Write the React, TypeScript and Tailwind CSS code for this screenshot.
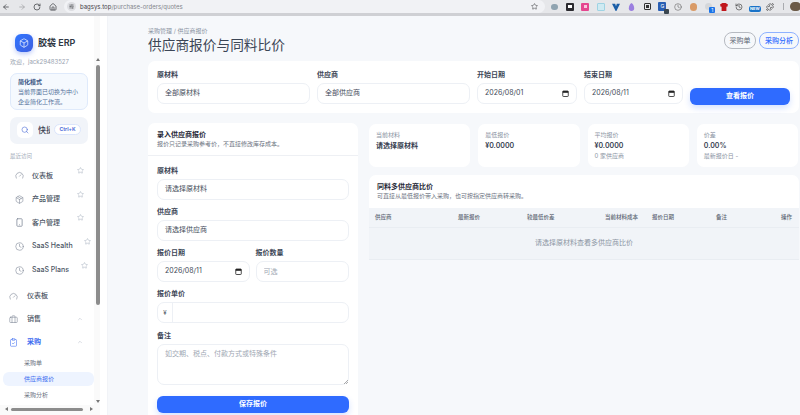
import React from 'react';
import { ArrowLeft, ArrowRight, RotateCw, Home, Star, Search, Gauge, Package, Smartphone, Clock, Briefcase, ClipboardCheck, ChevronUp, Box, Puzzle, History, SlidersHorizontal } from 'lucide-react';

function CalIcon() {
  return (
    <svg width="7" height="7" viewBox="0 0 14 14" className="shrink-0 text-[#222]">
      <rect x="1.5" y="2" width="11" height="11" rx="1.2" fill="none" stroke="currentColor" strokeWidth="1.6" />
      <rect x="1.5" y="2" width="11" height="3.6" fill="currentColor" />
    </svg>
  );
}

function Label({ children, className = '' }: { children: React.ReactNode; className?: string }) {
  return <div className={`text-[7px] leading-[10px] font-semibold text-[#3c4656] ${className}`}>{children}</div>;
}

function Field({ children, className = '' }: { children: React.ReactNode; className?: string }) {
  return (
    <div className={`h-[21px] flex items-center justify-between px-[7px] bg-white border border-[#edf0f5] rounded-[7px] text-[7px] text-[#414a58] ${className}`}>
      {children}
    </div>
  );
}

function Recent({ icon, label, star, className = '' }: { icon: React.ReactNode; label: string; star: string; className?: string }) {
  return (
    <div className={`h-[23.6px] flex items-center pl-[14px] shrink-0 ${className}`}>
      <span className="w-[10px] flex justify-center text-[#7b8494]">{icon}</span>
      <span className="ml-[8px] text-[7px] font-medium text-[#4b5563] whitespace-nowrap">{label}</span>
      <Star size={7} strokeWidth={1.5} className={`text-[#98a2b3] -mt-[10px] shrink-0 ${star}`} />
    </div>
  );
}

function Stat({ a, b, c }: { a: string; b: string; c?: string }) {
  return (
    <div className="flex-1 h-[43px] bg-white rounded-[7px] pl-[7px] pt-[7px]">
      <div className="text-[6px] leading-[8px] text-[#8b94a3]">{a}</div>
      <div className="mt-[0.5px] text-[7px] leading-[11px] font-semibold text-[#374151]">{b}</div>
      {c && <div className="mt-[0.5px] text-[6px] leading-[9px] text-[#8b94a3]">{c}</div>}
    </div>
  );
}

function Ext({ children }: { children: React.ReactNode }) {
  return <span className="w-[15.4px] h-[13px] flex items-center justify-center shrink-0 relative">{children}</span>;
}

function ChromeBar() {
  return (
    <div className="h-[16px] shrink-0 flex items-start bg-[#e6e7ea] border-b-[3px] border-[#cfd0d4] text-[#4a4c50]">
      <div className="w-[64px] h-[13px] flex items-center shrink-0 pl-[2px]">
        <ArrowLeft size={8} strokeWidth={2.4} />
        <ArrowRight size={8} strokeWidth={2} className="ml-[8px] text-[#9a9b9f]" />
        <RotateCw size={8} strokeWidth={2.4} className="ml-[7px]" />
        <Home size={8} strokeWidth={2.4} className="ml-[8px]" />
      </div>
      <div className="w-[481px] h-[13px] bg-[#f1f2f5] rounded-full flex items-center pl-[3px] pr-[7px] shrink-0">
        <span className="w-[9px] h-[9px] rounded-full bg-[#dcdde1] flex items-center justify-center">
          <SlidersHorizontal size={5} strokeWidth={2.4} />
        </span>
        <span className="ml-[4px] text-[6px] text-[#3f4145]">bagsys.top<span className="text-[#83868c]">/purchase-orders/quotes</span></span>
        <Star size={7} strokeWidth={2} className="ml-auto" />
      </div>
      <div className="flex items-center h-[13px] pl-[2px]">
        <Ext><span className="w-[7px] h-[6px] bg-[#8fa3b0] rounded-full" /></Ext>
        <Ext><span className="w-[8px] h-[8px] bg-[#2b2b30] rounded-[1px] flex items-center justify-center"><span className="w-[4px] h-[3px] bg-white" /></span></Ext>
        <Ext><span className="w-[8px] h-[8px] bg-[#e5468f] rounded-[1px] flex items-center justify-center"><span className="w-[3px] h-[3px] bg-[#f9c6de]" /></span></Ext>
        <Ext><span className="w-[8px] h-[8px] bg-[#cfeaf2] rounded-[1px] border border-[#9fd3e3]" /></Ext>
        <Ext><svg width="8" height="8" viewBox="0 0 10 10"><path d="M0 1h4l1 3 1-3h4L5.5 10h-1z" fill="#1c5fa8" /></svg></Ext>
        <Ext><svg width="7" height="8" viewBox="0 0 10 12"><path d="M5 0c3 2 4 5 4 8a4 4 0 0 1-8 0c0-3 1-6 4-8z" fill="#9b7fe0" /></svg></Ext>
        <Ext><span className="w-[7px] h-[7px] border border-[#333] rounded-[1px] flex items-center justify-center"><span className="w-[3px] h-[3px] bg-[#333]" /></span></Ext>
        <Ext><span className="w-[8px] h-[9px] bg-[#2a5fb4] rounded-[1px] flex items-center justify-center text-white text-[5px] leading-none">G</span><span className="absolute right-[1px] bottom-[-1px] w-[5px] h-[5px] bg-[#3a4650] rounded-[1px]" /></Ext>
        <Ext><Clock size={8} strokeWidth={1.8} className="text-[#666]" /></Ext>
        <Ext><span className="w-[7px] h-[8px] rounded-full bg-[#d99a66]" /></Ext>
        <Ext><span className="w-[7px] h-[7px] rounded-full bg-[#d5d7da]" /><span className="absolute right-[1px] bottom-[0px] w-[6px] h-[6px] bg-[#1a73e8] rounded-[1px] text-white text-[5px] leading-[6px] text-center">1</span></Ext>
        <Ext><svg width="8" height="8" viewBox="0 0 10 10"><path d="M0 2l3-2h4l3 2-1 3-1-.5V10H2V4.5L1 5z" fill="#c0161c" /></svg></Ext>
        <Ext><History size={8} strokeWidth={2} className="text-[#444]" /></Ext>
        <Ext><span className="w-[12px] h-[6px] mt-[4px] bg-[#1a73c8] rounded-[2px] text-white text-[4px] leading-[6px] text-center font-bold">NEW</span></Ext>
        <Ext><Puzzle size={8} strokeWidth={2} className="text-[#333]" /></Ext>
        <span className="w-[1px] h-[7px] bg-[#a9abaf] ml-[5px]" />
        <span className="w-[11px] h-[9px] rounded-full bg-[#6b5a48] ml-[6px] shrink-0" />
      </div>
    </div>
  );
}

function Sidebar() {
  return (
    <aside className="w-[108px] shrink-0 h-full bg-white border-r border-[#f1f3f7] flex">
      <div className="w-[100px] h-full flex flex-col">
        <div className="flex-1 min-h-0 flex">
          <div className="w-[94px] overflow-hidden flex flex-col pt-[18px]">
            <div className="flex items-center pl-[15px]">
              <div className="w-[18px] h-[18px] rounded-[6px] bg-gradient-to-br from-[#2f76ff] to-[#3d5fe0] shadow-[0_2px_5px_rgba(60,100,240,0.35)] flex items-center justify-center">
                <Box size={10} strokeWidth={1.6} className="text-white" />
              </div>
              <span className="ml-[5px] text-[9px] font-semibold text-[#2d3542] whitespace-nowrap">胶袋 ERP</span>
            </div>
            <div className="mt-[5px] pl-[10px] text-[6px] leading-[9px] text-[#9aa3b0] whitespace-nowrap">欢迎，jack29483527</div>
            <div className="mt-[7px] ml-[10px] w-[78px] h-[37px] shrink-0 rounded-[7px] border border-[#dfeafb] bg-[#f5f9fe] pl-[7px] pt-[4px]">
              <div className="text-[6px] leading-[8px] font-bold text-[#3a5684]">简化模式</div>
              <div className="mt-[1px] text-[6px] leading-[9.5px] text-[#54719b]">当前界面已切换为中小<br />企业简化工作流。</div>
            </div>
            <div className="mt-[7px] ml-[10px] w-[78px] h-[27px] shrink-0 rounded-[7px] bg-[#f1f4f9] flex items-start pt-[5px] pl-[7px]">
              <div className="w-[16px] h-[16px] bg-white rounded-[5px] flex items-center justify-center shrink-0">
                <Search size={8} strokeWidth={1.8} className="text-[#4f6fd8]" />
              </div>
              <div className="ml-[5px] w-[12px] overflow-hidden shrink-0 text-[8px] leading-[16px] font-medium text-[#374151] whitespace-nowrap">快捷键</div>
              <div className="ml-[4px] mt-[2px] w-[27px] h-[11px] rounded-full bg-white border border-[#dbe5fb] text-[5px] leading-[9px] font-bold text-center text-[#4f6fd8] shrink-0">Ctrl+K</div>
            </div>
            <div className="mt-[8px] pl-[10px] text-[5.5px] leading-[8px] text-[#a3abb8]">最近访问</div>
            <Recent icon={<Gauge size={9} strokeWidth={1.5} />} label="仪表板" star="ml-[23.5px]" className="mt-[4px]" />
            <Recent icon={<Package size={9} strokeWidth={1.5} />} label="产品管理" star="ml-[16.5px]" />
            <Recent icon={<Smartphone size={9} strokeWidth={2} />} label="客户管理" star="ml-[16.5px]" />
            <Recent icon={<Clock size={9} strokeWidth={1.5} />} label="SaaS Health" star="ml-[11px]" />
            <Recent icon={<Clock size={9} strokeWidth={1.5} />} label="SaaS Plans" star="ml-[12px]" />
            <div className="mt-[3px] h-[23px] shrink-0 flex items-center pl-[9px] text-[#7b8494]">
              <Gauge size={9} strokeWidth={1.5} />
              <span className="ml-[9px] text-[7px] font-medium text-[#4b5563]">仪表板</span>
            </div>
            <div className="h-[23px] shrink-0 flex items-center pl-[9px] pr-[11px] text-[#7b8494]">
              <Briefcase size={9} strokeWidth={1.5} />
              <span className="ml-[9px] text-[7px] font-medium text-[#4b5563]">销售</span>
              <ChevronUp size={6} strokeWidth={1.5} className="ml-auto text-[#98a2b3]" />
            </div>
            <div className="h-[23px] shrink-0 flex items-center pl-[9px] pr-[11px] text-[#3c6cf0]">
              <ClipboardCheck size={9} strokeWidth={1.5} />
              <span className="ml-[9px] text-[7px] font-semibold">采购</span>
              <ChevronUp size={6} strokeWidth={1.5} className="ml-auto text-[#98a2b3]" />
            </div>
            <div className="h-[18px] shrink-0 pl-[24px] text-[6px] leading-[17px] text-[#6b7280]">采购单</div>
            <div className="h-[14px] shrink-0 ml-[3px] rounded-[6px] bg-[#eef4ff] pl-[21px] text-[6px] leading-[14px] text-[#3c6cf0]">供应商报价</div>
            <div className="h-[17px] shrink-0 pl-[24px] text-[6px] leading-[17px] text-[#6b7280]">采购分析</div>
          </div>
          <div className="w-[6px] h-full bg-[#fafafa] relative">
            <span className="absolute left-[2px] top-[42px] border-x-[2px] border-x-transparent border-b-[3px] border-b-[#777]" />
            <span className="absolute left-[2px] top-[49px] w-[4px] h-[240px] rounded-full bg-[#8c8c8c]" />
            <span className="absolute left-[2px] bottom-[2px] border-x-[2px] border-x-transparent border-t-[3px] border-t-[#777]" />
          </div>
        </div>
        <div className="h-[10px] shrink-0 bg-[#fafafa] flex items-center pl-[5px] pr-[7px] pb-[2px]">
          <span className="border-y-[2px] border-y-transparent border-r-[3px] border-r-[#777]" />
          <span className="ml-[3px] w-[72px] h-[3px] rounded-full bg-[#8c8c8c]" />
          <span className="ml-auto border-y-[2px] border-y-transparent border-l-[3px] border-l-[#777]" />
        </div>
      </div>
    </aside>
  );
}

function FilterCard() {
  return (
    <div className="h-[52px] shrink-0 bg-white rounded-[7px] px-[9px] pt-[9px] flex items-start gap-[7px]">
      <div className="w-[153px] shrink-0"><Label>原材料</Label><Field className="mt-[3px]">全部原材料</Field></div>
      <div className="w-[153px] shrink-0"><Label>供应商</Label><Field className="mt-[3px]">全部供应商</Field></div>
      <div className="w-[100px] shrink-0"><Label>开始日期</Label><Field className="mt-[3px]">2026/08/01<CalIcon /></Field></div>
      <div className="w-[99px] shrink-0"><Label>结束日期</Label><Field className="mt-[3px]">2026/08/11<CalIcon /></Field></div>
      <button className="w-[100px] shrink-0 h-[16.5px] mt-[18px] rounded-[6px] bg-[#2f6bff] text-white text-[7px] font-semibold shadow-[0_3px_6px_rgba(47,107,255,0.2)]">查看报价</button>
    </div>
  );
}

function QuoteForm() {
  return (
    <div className="w-[210px] shrink-0 h-[300px] bg-white rounded-t-[7px]">
      <div className="h-[33px] border-b border-[#eef0f4] pl-[9px] pt-[7px]">
        <div className="text-[7px] leading-[10px] font-bold text-[#1f2937]">录入供应商报价</div>
        <div className="text-[6px] leading-[8px] text-[#6b7280] whitespace-nowrap">报价只记录采购参考价，不直接修改库存成本。</div>
      </div>
      <div className="px-[9px] pt-[10px] flex flex-col">
        <Label>原材料</Label>
        <Field className="mt-[3px]">请选择原材料</Field>
        <Label className="mt-[7px]">供应商</Label>
        <Field className="mt-[3px]">请选择供应商</Field>
        <div className="mt-[7px] flex gap-[6px]">
          <div className="w-[93px]"><Label>报价日期</Label><Field className="mt-[3px]">2026/08/11<CalIcon /></Field></div>
          <div className="w-[94px]"><Label>报价数量</Label>
            <input placeholder="可选" className="block mt-[3px] w-full h-[21px] px-[7px] bg-white border border-[#edf0f5] rounded-[7px] text-[7px] placeholder:text-[#a0a7b3] outline-none" />
          </div>
        </div>
        <Label className="mt-[7px]">报价单价</Label>
        <div className="mt-[3px] h-[21px] flex bg-white border border-[#edf0f5] rounded-[7px]">
          <span className="w-[15px] border-r border-[#edf0f5] text-[6px] leading-[19px] text-center text-[#4b5563]">¥</span>
        </div>
        <Label className="mt-[8px]">备注</Label>
        <div className="mt-[3px] h-[41px] relative">
          <textarea placeholder="如交期、税点、付款方式或特殊条件" className="block w-full h-full resize-none px-[7px] py-[4px] bg-white border border-[#edf0f5] rounded-[7px] text-[7px] placeholder:text-[#a0a7b3] outline-none" />
          <svg width="4" height="4" viewBox="0 0 4 4" className="absolute right-[1px] bottom-[1px]"><path d="M0 4L4 0M2 4L4 2" stroke="#888" strokeWidth="0.7" /></svg>
        </div>
        <button className="mt-[11px] h-[16.5px] rounded-[6px] bg-[#2f6bff] text-white text-[7px] font-semibold shadow-[0_3px_6px_rgba(47,107,255,0.2)]">保存报价</button>
      </div>
    </div>
  );
}

function Compare() {
  const head = [
    ['w-[83px]', '供应商'], ['w-[69px]', '最新报价'], ['w-[78px]', '较最低价差'], ['w-[47px]', '当前材料成本'], ['w-[64px]', '报价日期'], ['w-[65px]', '备注'], ['w-[12px]', '操作'],
  ];
  return (
    <div className="flex-1 min-w-0 pt-[1px]">
      <div className="flex gap-[8px] pr-[1px]">
        <Stat a="当前材料" b="请选择原材料" />
        <Stat a="最低报价" b="¥0.0000" />
        <Stat a="平均报价" b="¥0.0000" c="0 家供应商" />
        <Stat a="价差" b="0.00%" c="最新报价日 -" />
      </div>
      <div className="mt-[8px] bg-white rounded-t-[7px]">
        <div className="h-[33px] pl-[8px] pt-[7px]">
          <div className="text-[7px] leading-[10px] font-bold text-[#1f2937]">同料多供应商比价</div>
          <div className="text-[6px] leading-[8px] text-[#6b7280]">可直接从最低报价带入采购，也可按指定供应商转采购。</div>
        </div>
        <div className="h-[20px] flex items-center pl-[6px] bg-[#f1f4f8] border-b border-[#e9edf2] text-[5.5px] font-medium text-[#5b6472]">
          {head.map(([w, t]) => <span key={t} className={`${w} shrink-0 whitespace-nowrap`}>{t}</span>)}
        </div>
        <div className="h-[32px] flex items-center justify-center bg-[#f1f4f8] border-b border-[#e9edf2] text-[7px] text-[#8b94a3]">请选择原材料查看多供应商比价</div>
      </div>
    </div>
  );
}

export default function App() {
  return (
    <div className="w-[800px] h-[415px] overflow-hidden flex flex-col bg-[#f6f8fb] font-[Inter,'Noto_Sans_CJK_SC',sans-serif]">
      <ChromeBar />
      <div className="flex-1 min-h-0 flex">
        <Sidebar />
        <main className="flex-1 min-w-0 pl-[40px] pr-[1px] pt-[11px] flex flex-col overflow-hidden">
          <div className="h-[34px] shrink-0 flex items-start justify-between">
            <div>
              <div className="text-[6px] leading-[8px] text-[#8b94a3]">采购管理 / 供应商报价</div>
              <h1 className="text-[13.7px] leading-[18px] font-normal text-[#3c4656] mt-[1px] whitespace-nowrap">供应商报价与同料比价</h1>
            </div>
            <div className="flex gap-[3px] mt-[5px]">
              <span className="w-[32px] h-[17px] rounded-[8px] border border-[#b6bac1] text-[7px] leading-[15px] text-center text-[#5b6472]">采购单</span>
              <span className="w-[40px] h-[17px] rounded-[8px] border border-[#8fb2ff] text-[7px] leading-[15px] text-center font-medium text-[#2f6bff]">采购分析</span>
            </div>
          </div>
          <FilterCard />
          <div className="mt-[10px] flex gap-[11px]">
            <QuoteForm />
            <Compare />
          </div>
        </main>
      </div>
    </div>
  );
}
